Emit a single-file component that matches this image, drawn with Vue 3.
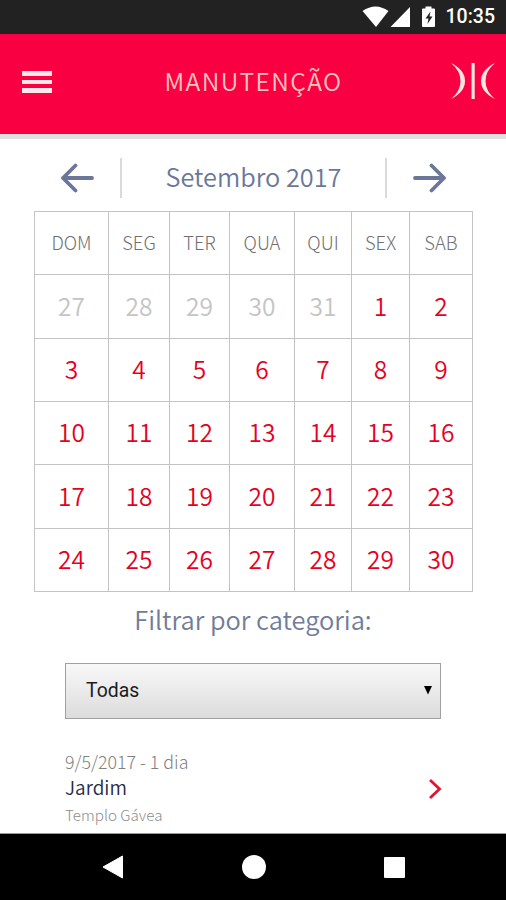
<template>
  <div class="phone">
    <div class="status-bar">
      <svg class="status-icons" width="80" height="24" viewBox="0 0 80 24">
        <path d="M0.500 6 Q13.500 -3 26.500 6 L14 22 Z" fill="#fff" />
        <path d="M28.500 22 L48 2 V22 Z" fill="#fff" />
        <path d="M60 3.500 H63.500 V1.500 H69.500 V3.500 H72 Q73 3.500 73 4.500 V21 Q73 22 72 22 H61 Q60 22 60 21 V4.500 Q60 3.500 61 3.500 Z" fill="#fff" />
        <path d="M68.500 6.500 L63.500 13.500 H66.500 L65.500 19 L70.500 11.500 H67.500 Z" fill="#222" />
      </svg>
      <span class="clock">10:35</span>
    </div>

    <header class="app-header">
      <button class="menu-button" aria-label="Menu">
        <span></span>
        <span></span>
        <span></span>
      </button>
      <h1 class="title">MANUTENÇÃO</h1>
      <svg class="brand" width="46" height="36" viewBox="0 0 46 36" fill="#ffe4df">
        <path d="M1 0 Q15 7 15 18 Q15 29 1 36 Q10.500 28 10.500 18 Q10.500 8 1 0 Z" />
        <rect x="21.500" y="0" width="3.200" height="36" />
        <path d="M45 0 Q31 7 31 18 Q31 29 45 36 Q35.500 28 35.500 18 Q35.500 8 45 0 Z" />
      </svg>
    </header>

    <main class="content">
      <div class="month-nav">
        <button class="arrow" aria-label="Anterior">
          <svg width="34" height="30" viewBox="0 0 34 30">
            <path d="M32 15 H3 M15.500 2.500 L3 15 L15.500 27.500" />
          </svg>
        </button>
        <span class="month">Setembro 2017</span>
        <button class="arrow" aria-label="Próximo">
          <svg width="34" height="30" viewBox="0 0 34 30">
            <path d="M2 15 H31 M18.500 2.500 L31 15 L18.500 27.500" />
          </svg>
        </button>
      </div>

      <div class="calendar">
        <div v-for="name in weekdays" :key="name" class="cell weekday">{{ name }}</div>
        <div
          v-for="(day, index) in days"
          :key="index"
          class="cell day"
          :class="{ muted: !day.current }"
        >
          {{ day.number }}
        </div>
      </div>

      <p class="filter-label">Filtrar por categoria:</p>

      <div class="select">
        <span>Todas</span>
        <svg width="8" height="9" viewBox="0 0 8 9">
          <path d="M0 0 H8 L4 8.500 Z" fill="#000" />
        </svg>
      </div>

      <div v-for="item in items" :key="item.title" class="item">
        <div class="item-text">
          <div class="item-date">{{ item.date }}</div>
          <div class="item-title">{{ item.title }}</div>
          <div class="item-place">{{ item.place }}</div>
        </div>
        <svg class="chevron" width="14" height="22" viewBox="0 0 14 22">
          <path d="M2 2 L11.500 11 L2 20" />
        </svg>
      </div>
    </main>

    <nav class="system-nav">
      <svg width="22" height="24" viewBox="0 0 22 24">
        <path d="M1 12 L20.500 1 V23 Z" fill="#fff" stroke="#fff" stroke-linejoin="round" />
      </svg>
      <span class="home"></span>
      <span class="recent"></span>
    </nav>
  </div>
</template>

<script setup>
const weekdays = ['DOM', 'SEG', 'TER', 'QUA', 'QUI', 'SEX', 'SAB'];

const days = [
  ...[27, 28, 29, 30, 31].map((number) => ({ number, current: false })),
  ...Array.from({ length: 30 }, (_, i) => ({ number: i + 1, current: true }))
];

const items = [
  { date: '9/5/2017 - 1 dia', title: 'Jardim', place: 'Templo Gávea' }
];
</script>

<style>
body {
  margin: 0;
}
</style>

<style scoped>
.phone {
  width: 506px;
  height: 900px;
  display: flex;
  flex-direction: column;
  overflow: hidden;
  background: #fff;
  font-family: "Noto Sans CJK JP", "Noto Sans", sans-serif;
  font-weight: 350;
}

button {
  padding: 0;
  border: 0;
  background: none;
}

svg {
  display: block;
  flex: none;
}

.status-bar {
  flex: none;
  height: 34px;
  box-sizing: border-box;
  padding: 0 11px 0 0;
  display: flex;
  align-items: center;
  justify-content: flex-end;
  background: #222;
}

.status-icons {
  margin-right: 4px;
}

.clock {
  color: #fff;
  font: 500 19.5px/36px Roboto, sans-serif;
}

.app-header {
  flex: none;
  height: 105px;
  box-sizing: border-box;
  padding: 0 10px 6px 22px;
  border-bottom: 5px solid #e2dfde;
  display: flex;
  align-items: center;
  justify-content: space-between;
  background: #f80042;
}

.menu-button {
  width: 30px;
  padding-top: 2px;
  display: flex;
  flex-direction: column;
  gap: 4px;
}

.menu-button span {
  height: 4.4px;
  background: #ffe6e8;
}

.title {
  margin: 0 0 0 5px;
  color: #ffc4bd;
  font-size: 24.5px;
  line-height: 36px;
  font-weight: 350;
  letter-spacing: 1.4px;
}

.content {
  flex: 1;
  min-height: 0;
  overflow: hidden;
}

.month-nav {
  height: 40px;
  margin: 19px 0 0;
  padding: 0 59px 0 60px;
  display: flex;
}

.arrow {
  width: 62px;
  display: flex;
  align-items: center;
  border-right: 2px solid #dadada;
}

.month + .arrow {
  border-right: 0;
  border-left: 2px solid #dadada;
  justify-content: flex-end;
}

.arrow path {
  fill: none;
  stroke: #6b7799;
  stroke-width: 3.8;
  stroke-linecap: round;
  stroke-linejoin: round;
}

.month {
  flex: 1;
  text-align: center;
  color: #6b7799;
  font-size: 25.3px;
  line-height: 36px;
}

.calendar {
  width: 439px;
  box-sizing: border-box;
  margin: 13px 0 0 34px;
  display: grid;
  grid-template-columns: 74px 61px 60px 65px 57px 58px 63px;
  grid-template-rows: 63px 64px 63px 63px 64px 63px;
  border-top: 1px solid #c4c4c4;
  border-left: 1px solid #c4c4c4;
}

.cell {
  display: flex;
  align-items: center;
  justify-content: center;
  padding-bottom: 3px;
  border-right: 1px solid #c4c4c4;
  border-bottom: 1px solid #c4c4c4;
}

.weekday {
  color: #6f6f6f;
  font-size: 18.4px;
  font-weight: 300;
}

.day {
  color: #e6001f;
  font-size: 24.5px;
}

.day.muted {
  color: #c4c4c4;
}

.filter-label {
  margin: 8px 0 0;
  text-align: center;
  color: #707c9a;
  font-size: 25.4px;
  line-height: 38px;
}

.select {
  width: 376px;
  height: 56px;
  box-sizing: border-box;
  margin: 25px 0 0 65px;
  padding: 0 8px 1px 20px;
  display: flex;
  align-items: center;
  justify-content: space-between;
  border: 1px solid #a0a0a0;
  background: linear-gradient(#f8f8f8, #dcdcdc);
  color: #1c1c1c;
  font-family: Roboto, sans-serif;
  font-weight: 400;
  font-size: 19.4px;
}

.item {
  margin: 29px 64px 0 65px;
  display: flex;
  align-items: center;
  justify-content: space-between;
}

.item-date {
  color: #808080;
  font-size: 17.8px;
  line-height: 26px;
  font-weight: 300;
}

.item-title {
  color: #252b48;
  font-size: 19px;
  line-height: 26px;
}

.item-place {
  color: #8c8c8c;
  font-size: 15.2px;
  line-height: 29px;
  font-weight: 300;
}

.chevron path {
  fill: none;
  stroke: #e8112d;
  stroke-width: 2.8;
}

.system-nav {
  flex: none;
  height: 67px;
  box-sizing: border-box;
  padding: 0 101px 0 102px;
  display: flex;
  align-items: center;
  justify-content: space-between;
  border-top: 1px solid #999;
  background: #000;
}

.home {
  width: 24px;
  height: 24px;
  border-radius: 50%;
  background: #fff;
}

.recent {
  width: 21px;
  height: 21px;
  border-radius: 1px;
  background: #fff;
}
</style>
